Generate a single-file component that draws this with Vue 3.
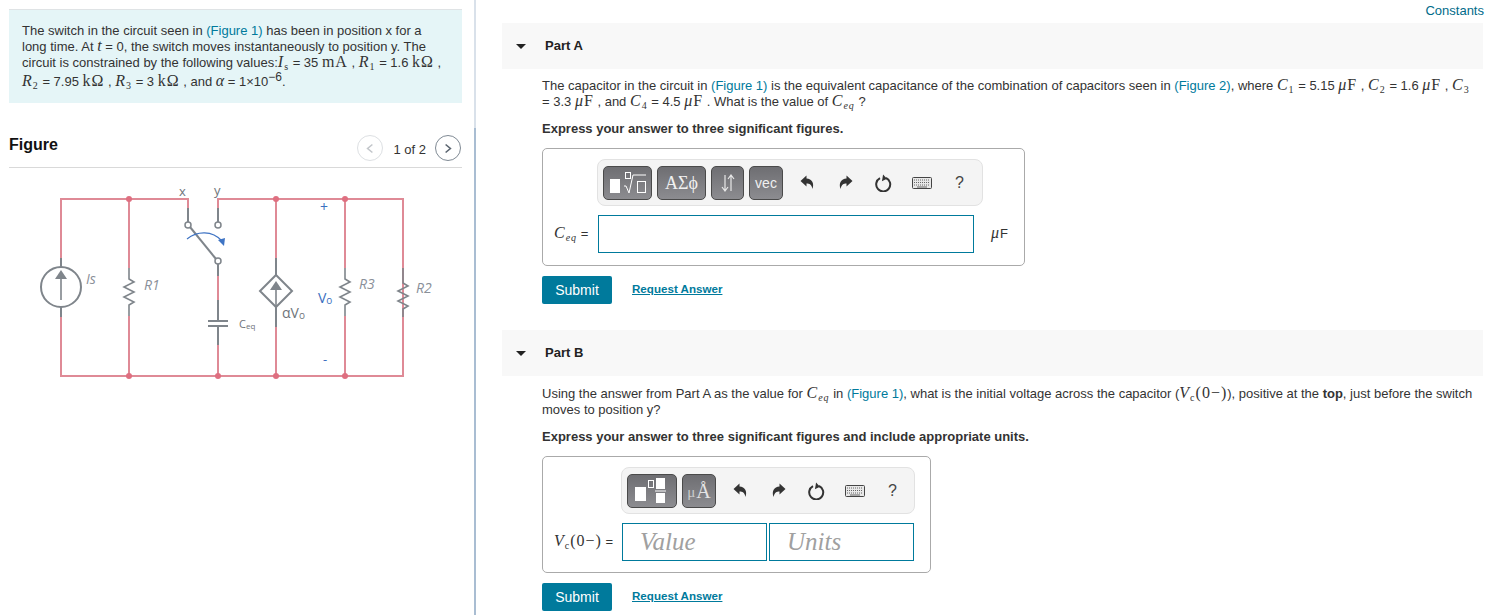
<template>
  <div class="page">
    <aside class="left">
      <div class="intro">
        The switch in the circuit seen in <a class="link">(Figure 1)</a> has been in position x for a long time. At
        <i class="mi">t</i> = 0, the switch moves instantaneously to position y. The circuit is constrained by the following values:<span class="math"><i>I</i><sub>s</sub></span> = 35 <span class="math">mA</span> , <span class="math"><i>R</i><sub>1</sub></span> = 1.6 <span class="math">kΩ</span> ,
        <span class="math"><i>R</i><sub>2</sub></span> = 7.95 <span class="math">kΩ</span> , <span class="math"><i>R</i><sub>3</sub></span> = 3 <span class="math">kΩ</span> , and <i class="mi">α</i> = 1×10<sup class="exp">−6</sup>.
      </div>

      <header class="figure-head">
        <h2>Figure</h2>
        <div class="pager">
          <span class="round off">
            <svg viewBox="0 0 10 12" width="8" height="11"><path d="M8 1L2 6l6 5" fill="none" stroke="#c3c7cb" stroke-width="2" /></svg>
          </span>
          <span class="count">1 of 2</span>
          <span class="round">
            <svg viewBox="0 0 10 12" width="8" height="11"><path d="M2 1l6 5-6 5" fill="none" stroke="#5b6570" stroke-width="2" /></svg>
          </span>
        </div>
      </header>

      <svg class="circuit" width="475" height="230" viewBox="0 168 475 230">
        <g fill="none" stroke="#df8a96" stroke-width="2">
          <path d="M61 258V199H188V208" />
          <path d="M61 317V376H403V199H218V208" />
          <path d="M129 199V268M129 316V376" />
          <path d="M218 276V300M218 345V376" />
          <path d="M276 199V258M276 327V376" />
          <path d="M345 199V268M345 316V376" />
        </g>
        <g fill="none" stroke="#7f858b" stroke-width="2">
          <path d="M61 258V267M61 307V317" />
          <circle cx="61" cy="287" r="20" />
          <path d="M129 268V279L134 282L124 287L134 292L124 297L134 302L129 305V316" stroke-width="1.6" />
          <path d="M345 268V279L350 282L340 287L350 292L340 297L350 302L345 305V316" stroke-width="1.6" />
          <path d="M403 268V283L408 286L398 291L408 296L398 301L408 306L403 309V317" stroke-width="1.6" />
          <path d="M188 208V222M218 208V222M218 264V276M218 300V321M218 326V345" />
          <path d="M208 321H228M208 326H228" />
          <path d="M190 227L216 259" />
          <path d="M276 258V275M276 307V327" />
          <path d="M276 275L292 291L276 307L260 291Z" />
          <path d="M276 307V290" stroke-width="1.6" />
          <path d="M61 300V278" stroke-width="1.6" />
        </g>
        <g fill="#fff" stroke="#7f858b" stroke-width="1.5">
          <circle cx="188" cy="225" r="3" />
          <circle cx="218" cy="225" r="3" />
          <circle cx="218" cy="261" r="3" />
        </g>
        <g fill="#7f858b">
          <path d="M61 270L67 279H55Z" />
          <path d="M276 281L282 290H270Z" />
        </g>
        <g fill="#df6f80">
          <circle v-for="n in nodes" :key="n[0] + '-' + n[1]" :cx="n[0]" :cy="n[1]" r="3" />
        </g>
        <path d="M187 239C197 231 212 230 222 241" fill="none" stroke="#3f74c4" stroke-width="1.2" />
        <path d="M218 240L225 238L224 246Z" fill="#3f74c4" />
        <g class="labels">
          <text x="179" y="196" font-size="13">x</text>
          <text x="214" y="195" font-size="13">y</text>
          <text x="86" y="284" class="it">Is</text>
          <text x="144" y="290" class="it">R1</text>
          <text x="239" y="328" font-size="11">C<tspan font-size="8" dy="1">eq</tspan></text>
          <text x="282" y="318" font-size="14">αV<tspan font-size="10" dy="1">o</tspan></text>
          <text x="318" y="303" font-size="14" class="blue">V<tspan font-size="10" dy="1">o</tspan></text>
          <text x="320" y="212" font-size="14" class="blue">+</text>
          <text x="323" y="364" font-size="13" class="blue">-</text>
          <text x="359" y="289" class="it">R3</text>
          <text x="416" y="293" class="it">R2</text>
        </g>
      </svg>
    </aside>

    <div class="splitter"></div>

    <main class="right">
      <a class="constants link">Constants</a>

      <section class="part">
        <div class="part-bar"><span class="caret"></span><h3>Part A</h3></div>
        <div class="part-body">
          <p class="question">
            The capacitor in the circuit in <a class="link">(Figure 1)</a> is the equivalent capacitance of the combination of capacitors seen in <a class="link">(Figure 2)</a>, where <span class="math"><i>C</i><sub>1</sub></span> = 5.15 <span class="math"><i>μ</i>F</span> , <span class="math"><i>C</i><sub>2</sub></span> = 1.6 <span class="math"><i>μ</i>F</span> , <span class="math"><i>C</i><sub>3</sub></span><br />
            = 3.3 <span class="math"><i>μ</i>F</span> , and <span class="math"><i>C</i><sub>4</sub></span> = 4.5 <span class="math"><i>μ</i>F</span> . What is the value of <span class="math"><i>C</i><sub><i>eq</i></sub></span> ?
          </p>
          <p class="hint">Express your answer to three significant figures.</p>

          <div class="answer answer-a">
            <div class="toolbar">
              <span class="tbtn w49">
                <svg width="38" height="22" viewBox="0 0 38 22">
                  <rect x="1" y="7" width="10" height="14" fill="#fff" />
                  <rect x="16.500" y="0.500" width="5" height="6" fill="none" stroke="#fff" />
                  <path d="M15 14h2l3 7 4-18h13" fill="none" stroke="#fff" />
                  <rect x="28.500" y="9.500" width="8" height="11" fill="none" stroke="#fff" />
                </svg>
              </span>
              <span class="tbtn w49 serif">ΑΣϕ</span>
              <span class="tbtn w33">
                <svg width="14" height="18" viewBox="0 0 14 18"><path d="M4 1v15M1 13l3 4 3-4M10 17V2M7 5l3-4 3 4" fill="none" stroke="#e8e8e8" stroke-width="1.2" /></svg>
              </span>
              <span class="tbtn w34 vec">vec</span>
              <ToolIcons />
            </div>
            <div class="answer-row">
              <label class="eq-label"><span class="math"><i>C</i><sub><i>eq</i></sub></span> =</label>
              <div class="field wide"></div>
              <span class="unit"><span class="math"><i>μ</i></span>F</span>
            </div>
          </div>

          <div class="actions">
            <button class="submit">Submit</button>
            <a class="request">Request Answer</a>
          </div>
        </div>
      </section>

      <section class="part part-b">
        <div class="part-bar"><span class="caret"></span><h3>Part B</h3></div>
        <div class="part-body">
          <p class="question">
            Using the answer from Part A as the value for <span class="math"><i>C</i><sub><i>eq</i></sub></span> in <a class="link">(Figure 1)</a>, what is the initial voltage across the capacitor (<span class="math"><i>V</i><sub>c</sub>(0−)</span>), positive at the <b>top</b>, just before the switch moves to position y?
          </p>
          <p class="hint">Express your answer to three significant figures and include appropriate units.</p>

          <div class="answer answer-b">
            <div class="toolbar">
              <span class="tbtn w50">
                <svg width="38" height="28" viewBox="0 0 38 28">
                  <rect x="2" y="10" width="11" height="14" fill="#fff" />
                  <rect x="15.500" y="3.500" width="5" height="7" fill="none" stroke="#fff" />
                  <rect x="23" y="1" width="9" height="11" fill="#fff" />
                  <path d="M22 14h11" stroke="#fff" />
                  <rect x="23" y="16" width="9" height="10" fill="#fff" />
                </svg>
              </span>
              <span class="tbtn w34 serif units"><span class="mu">μ</span>Å</span>
              <ToolIcons />
            </div>
            <div class="answer-row">
              <label class="eq-label"><span class="math"><i>V</i><sub>c</sub>(0−)</span> =</label>
              <div class="field half">Value</div>
              <div class="field half">Units</div>
            </div>
          </div>

          <div class="actions">
            <button class="submit">Submit</button>
            <a class="request">Request Answer</a>
          </div>
        </div>
      </section>
    </main>
  </div>
</template>

<script setup>
import { h } from 'vue';

const nodes = [
  [129, 199], [276, 199], [345, 199],
  [129, 376], [218, 376], [276, 376], [345, 376]
];

const arrow = 'M6.500 0.500L0.500 6l6 5.500V8.500c3 0 5 1 6 5.500C14.500 8 12 4 6.500 3.500Z';

// undo, redo, reset, keyboard, help are the same on every toolbar
const ToolIcons = () => [
  h('span', { class: 'tool first' }, [
    h('svg', { width: 15, height: 15, viewBox: '0 0 15 15' }, [h('path', { d: arrow, fill: '#333' })])
  ]),
  h('span', { class: 'tool' }, [
    h('svg', { width: 15, height: 15, viewBox: '0 0 15 15' }, [h('path', { d: arrow, fill: '#333', transform: 'matrix(-1 0 0 1 15 0)' })])
  ]),
  h('span', { class: 'tool' }, [
    h('svg', { width: 17, height: 18, viewBox: '0 0 17 18' }, [
      h('path', { d: 'M5 4.200A7 7 0 1 0 11 4', fill: 'none', stroke: '#333', 'stroke-width': 2 }),
      h('path', { d: 'M7.500 0.500V7.500L12 4Z', fill: '#333', transform: 'rotate(10 8 4)' })
    ])
  ]),
  h('span', { class: 'tool' }, [
    h('svg', { width: 20, height: 12, viewBox: '0 0 20 12' }, [
      h('rect', { x: 0.5, y: 0.5, width: 19, height: 11, rx: 1, fill: '#e8e8e8', stroke: '#444' }),
      h('path', { d: 'M2 3h16M2 5.500h16M2 8h16', stroke: '#666', 'stroke-dasharray': '1 1' }),
      h('path', { d: 'M5 10h10', stroke: '#666' })
    ])
  ]),
  h('span', { class: 'tool help' }, '?')
];
</script>

<style>
html, body {
  margin: 0;
  height: 615px;
  overflow: hidden;
  background: #fff;
}
</style>

<style scoped>
.page {
  display: flex;
  width: 1491px;
  height: 615px;
  overflow: hidden;
  font-family: "Liberation Sans", Arial, sans-serif;
  font-size: 13px;
  line-height: 16px;
  color: #333;
}

.left {
  width: 453px;
  margin-left: 9px;
  margin-right: 12px;
  flex-shrink: 0;
}

.splitter {
  width: 2px;
  flex-shrink: 0;
  background: linear-gradient(#d9e1ea 128px, #a9bdd2 128px);
}

.link {
  color: #007a9c;
}

.math {
  font-family: "Liberation Serif", "Times New Roman", serif;
  font-size: 16px;
  line-height: 0;
  letter-spacing: 1px;
  color: #333;
}

.mi {
  font-family: "Liberation Serif", "Times New Roman", serif;
  font-size: 16px;
  line-height: 0;
}

sub {
  font-size: 10px;
  line-height: 0;
  vertical-align: -3px;
}

.exp {
  font-size: 12px;
  line-height: 1;
  vertical-align: 5px;
}

.intro {
  margin-top: 9px;
  height: 94px;
  box-sizing: border-box;
  padding: 13px 13px 0;
  background: #e5f5f7;
  border-top: 1px solid #dfe3e5;
}

.figure-head {
  display: flex;
  align-items: flex-start;
  justify-content: space-between;
  height: 65px;
  box-sizing: border-box;
  padding-top: 32px;
  border-bottom: 1px solid #d9d9d9;
}

.figure-head h2 {
  margin: 0;
  font-size: 16px;
  line-height: 20px;
  font-weight: 700;
  color: #111;
}

.pager {
  display: flex;
  align-items: center;
  margin: 0 1px 0 0;
}

.round {
  display: flex;
  align-items: center;
  justify-content: center;
  width: 26px;
  height: 26px;
  box-sizing: border-box;
  border: 1px solid #7f8a94;
  border-radius: 50%;
}

.round.off {
  border-color: #dde0e3;
}

.count {
  margin: 3px 9px 0 10px;
}

.circuit {
  display: block;
  margin-left: -9px;
}

.labels text {
  font-family: "Open Sans", "Liberation Sans", sans-serif;
  fill: #6f757b;
}

.labels .it {
  font-style: italic;
  font-size: 14px;
  fill: #8a9099;
}

.labels .blue {
  fill: #3a6fc0;
}

.right {
  flex: 1;
  min-width: 0;
  padding: 0 8px 0 26px;
}

.constants {
  display: block;
  height: 23px;
  padding-top: 3px;
  box-sizing: border-box;
  text-align: right;
  margin-right: -1px;
  color: #006b8a;
}

.part-bar {
  display: flex;
  align-items: center;
  height: 46px;
  background: #f8f8f8;
}

.caret {
  width: 0;
  height: 0;
  margin: 0 19px 0 14px;
  border-style: solid;
  border-width: 5px 5px 0;
  border-color: #222 transparent transparent;
}

.part-bar h3 {
  margin: 0;
  font-size: 13px;
  font-weight: 700;
  color: #222;
}

.part-body {
  padding-left: 40px;
}

.question {
  margin: 9px 0 0;
}

.part-b .question {
  margin-top: 10px;
}

.hint {
  margin: 11px 0 0;
  font-weight: 700;
}

.answer {
  box-sizing: border-box;
  margin-top: 11px;
  height: 118px;
  border: 1px solid #aaa;
  border-radius: 5px;
  padding-top: 10px;
}

.answer-a {
  width: 483px;
}

.answer-b {
  width: 389px;
  height: 117px;
}

.toolbar {
  display: flex;
  align-items: center;
  box-sizing: border-box;
  height: 47px;
  padding: 0 5px;
  gap: 5px;
  background: #f4f4f4;
  border: 1px solid #e2e2e2;
  border-radius: 8px;
}

.answer-a .toolbar {
  width: 386px;
  margin-left: 54px;
}

.answer-b .toolbar {
  width: 294px;
  margin-left: 78px;
}

.tbtn {
  display: flex;
  align-items: center;
  justify-content: center;
  box-sizing: border-box;
  height: 34px;
  color: #f0f0f0;
  background: linear-gradient(#6e6e72, #8c8c90);
  border: 1px solid #4a4a4a;
  border-radius: 5px;
}

.w49 { width: 49px; }
.w50 { width: 50px; }
.w33 { width: 33px; }
.w34 { width: 34px; }

.serif {
  font-family: "Liberation Serif", serif;
  font-size: 18px;
}

.units {
  font-size: 20px;
  color: #e4e4e4;
}

.mu {
  font-size: 15px;
  margin-top: 3px;
  margin-right: 1px;
  color: #ccc;
}

.vec {
  font-size: 14px;
}

.toolbar :deep(.tool) {
  display: flex;
  align-items: center;
  justify-content: center;
  flex-shrink: 0;
  width: 33px;
  height: 32px;
}

.toolbar :deep(.first) {
  margin-left: 3px;
}

.toolbar :deep(.help) {
  font-size: 16px;
  color: #444;
}

.answer-row {
  display: flex;
  align-items: center;
  margin-top: 9px;
}

.eq-label {
  white-space: nowrap;
  color: #333;
  padding-left: 11px;
}

.answer-a .eq-label {
  width: 44px;
}

.answer-b .eq-label {
  width: 68px;
}

.field {
  box-sizing: border-box;
  height: 38px;
  border: 1px solid #007a9c;
  background: #fff;
}

.wide {
  width: 376px;
}

.unit {
  margin-left: 17px;
}

.half {
  width: 145px;
  margin-right: 2px;
  padding-left: 17px;
  font-family: "Liberation Serif", serif;
  font-style: italic;
  font-size: 25px;
  line-height: 36px;
  color: #a0a0a0;
}

.actions {
  display: flex;
  align-items: center;
  margin-top: 10px;
}

.submit {
  width: 70px;
  height: 28px;
  padding: 0;
  border: 0;
  border-radius: 2px;
  background: #007a9c;
  color: #fff;
  font-family: inherit;
  font-size: 14px;
}

.request {
  margin: 0 0 2px 20px;
  color: #007a9c;
  font-weight: 700;
  font-size: 11.600px;
  text-decoration: underline;
}

.part-b {
  margin-top: 26px;
}
</style>
